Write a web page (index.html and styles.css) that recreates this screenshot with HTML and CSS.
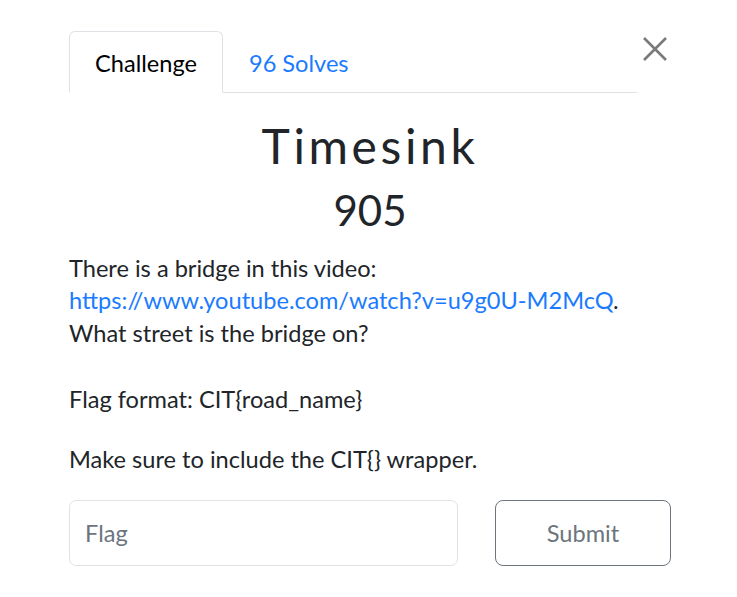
FILE: index.html
```html
<!DOCTYPE html>
<html>
<head>
<meta charset="utf-8">
<link rel="stylesheet" href="styles.css">
</head>
<body>
<div class="modal">
  <button class="close" aria-label="Close">
    <svg width="26" height="26" viewBox="0 0 26 26"><path d="M2 2 L24 24 M24 2 L2 24" stroke="#7a7a7a" stroke-width="2.6" fill="none"/></svg>
  </button>
  <div class="tabs">
    <div class="tab active">Challenge</div>
    <div class="tab link">96 Solves</div>
  </div>
  <h2 class="name">Timesink</h2>
  <h3 class="value">905</h3>
  <div class="desc">
    <p class="p1">There is a bridge in this video:<br><a href="#">https://www.youtube.com/watch?v=u9g0U-M2McQ</a>.<br>What street is the bridge on?</p>
    <p class="p2">Flag format: CIT{road_name}</p>
    <p class="p3">Make sure to include the CIT{} wrapper.</p>
  </div>
  <div class="form">
    <input class="flag" type="text" placeholder="Flag">
    <button class="submit">Submit</button>
  </div>
</div>
</body>
</html>
```
FILE: styles.css
```css
html, body { margin: 0; padding: 0; background: #fff; }
body { font-family: Lato, "Open Sans", sans-serif; color: #212529; font-size: 23.6px; line-height: 32.4px; }
.modal { position: relative; padding: 31px 66px 0 69px; }
.close { position: absolute; top: 36px; left: 642px; background: none; border: 0; padding: 0; width: 26px; height: 26px; cursor: pointer; }
.close svg { display: block; }
.tabs { display: flex; width: 568px; border-bottom: 1px solid #dee2e6; }
.tab { padding: 0 25px; height: 60px; line-height: 62px; font-size: 23.6px; margin-bottom: -1px; border: 1px solid transparent; border-radius: 6px 6px 0 0; }
.tab.active { color: #000; border-color: #dee2e6 #dee2e6 #fff; background: #fff; }
.tab.link { color: #1a7bff; }
.name { margin: 25px 0 0; text-align: center; font-weight: 400; font-size: 48px; letter-spacing: 3.6px; line-height: 56px; }
.value { margin: 11px 0 0; text-align: center; font-weight: 400; font-size: 42px; line-height: 50px; }
.desc { margin-top: 17px; }
.desc p { margin: 0; }
.desc .p1 { margin-bottom: 34px; }
.desc .p2 { margin-bottom: 27px; }
.desc a { color: #1a7bff; text-decoration: none; }
.form { display: flex; gap: 37px; margin-top: 25px; width: 602px; }
.flag { width: 389px; height: 66px; box-sizing: border-box; border: 1px solid #dfe2e6; border-radius: 7px; padding: 0 15px; font-family: Lato, sans-serif; font-size: 23.6px; color: #495057; }
.flag::placeholder { color: #6c757d; }
.submit { width: 176px; height: 66px; box-sizing: border-box; border: 1px solid #6c757d; border-radius: 8px; background: #fff; color: #6c757d; font-family: Lato, sans-serif; font-size: 23.6px; }
```
